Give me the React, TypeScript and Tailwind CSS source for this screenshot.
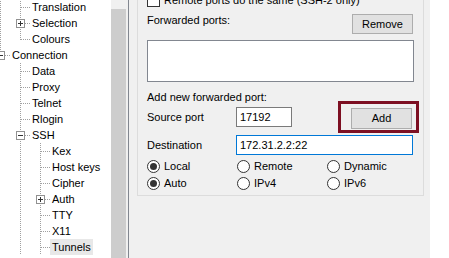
import React from 'react'

type Row = {
  label: string
  level: number
  cont: boolean[]
  last: boolean
  box?: 'plus' | 'minus'
  selected?: boolean
}

const rows: Row[] = [
  { label: 'Translation', level: 1, cont: [true], last: false },
  { label: 'Selection', level: 1, cont: [true], last: false, box: 'plus' },
  { label: 'Colours', level: 1, cont: [true], last: true },
  { label: 'Connection', level: 0, cont: [], last: true, box: 'minus' },
  { label: 'Data', level: 1, cont: [false], last: false },
  { label: 'Proxy', level: 1, cont: [false], last: false },
  { label: 'Telnet', level: 1, cont: [false], last: false },
  { label: 'Rlogin', level: 1, cont: [false], last: false },
  { label: 'SSH', level: 1, cont: [false], last: false, box: 'minus' },
  { label: 'Kex', level: 2, cont: [false, true], last: false },
  { label: 'Host keys', level: 2, cont: [false, true], last: false },
  { label: 'Cipher', level: 2, cont: [false, true], last: false },
  { label: 'Auth', level: 2, cont: [false, true], last: false, box: 'plus' },
  { label: 'TTY', level: 2, cont: [false, true], last: false },
  { label: 'X11', level: 2, cont: [false, true], last: false },
  { label: 'Tunnels', level: 2, cont: [false, true], last: false, selected: true },
]

// one 20x16 cell of tree guide lines
function Guide({ through, own, last, box }: { through?: boolean; own?: boolean; last?: boolean; box?: 'plus' | 'minus' }) {
  const dot = { stroke: '#a0a0a0', strokeWidth: 1, strokeDasharray: '1 1' }
  return (
    <svg width="20" height="16" viewBox="0 0 20 16" shapeRendering="crispEdges" className="shrink-0">
      {through && <line x1="10.5" y1="0" x2="10.5" y2="16" {...dot} />}
      {own && <line x1="10.5" y1="0" x2="10.5" y2={last ? 9 : 16} {...dot} />}
      {own && <line x1="11" y1="8.5" x2="20" y2="8.5" {...dot} />}
      {box && (
        <>
          <rect x="6.5" y="4.5" width="8" height="8" fill="#fff" stroke="#919191" />
          <line x1="8" y1="8.5" x2="13" y2="8.5" stroke="#333" />
          {box === 'plus' && <line x1="10.5" y1="6" x2="10.5" y2="11" stroke="#333" />}
        </>
      )}
    </svg>
  )
}

function Radio({ label, checked }: { label: string; checked?: boolean }) {
  return (
    <div className="flex items-center h-[16px]">
      <div className="w-[13px] h-[13px] shrink-0 rounded-full border border-[#333] bg-white flex items-center justify-center">
        {checked && <div className="w-[7px] h-[7px] rounded-full bg-[#333]" />}
      </div>
      <span className="ml-[4px]">{label}</span>
    </div>
  )
}

export default function App() {
  return (
    <div className="flex w-[449px] h-[258px] overflow-hidden text-[11px] leading-[14px] text-black font-['Liberation_Sans',Arial,sans-serif]">
      {/* tree */}
      <div className="w-[111px] shrink-0 bg-white overflow-hidden">
        <div className="flex flex-col -ml-[10px] -mt-[1px]">
          {rows.map((r) => (
            <div key={r.label} className="flex h-[16px] items-stretch">
              {r.cont.map((c, i) => (
                <Guide key={i} through={c} />
              ))}
              <Guide own last={r.last} box={r.box} />
              <span className={`px-[2px] leading-[16px] whitespace-nowrap ${r.selected ? 'bg-[#e8e8e8]' : ''}`}>{r.label}</span>
            </div>
          ))}
        </div>
      </div>

      {/* scrollbar */}
      <div className="w-[17px] shrink-0 bg-[#f0f0f0] flex">
        <div className="w-[15px] mt-[9px] bg-[#cdcdcd]" />
      </div>
      <div className="w-px shrink-0 bg-[#828790]" />

      {/* panel */}
      <div className="w-[301px] shrink-0 bg-[#f0f0f0] pl-[8px]">
        <div className="w-[287px] -mt-[13px] border border-[#dcdcdc] pt-[5px] pl-[9px] pr-[9px] pb-[4px] flex flex-col">
          <div className="flex items-center h-[14px]">
            <div className="w-[13px] h-[13px] shrink-0 border border-[#333] bg-white" />
            <span className="ml-[4px] whitespace-nowrap">Remote ports do the same (SSH-2 only)</span>
          </div>

          <div className="flex justify-between items-start h-[20px] mt-[7px]">
            <span className="-mt-[1px]">Forwarded ports:</span>
            <button className="w-[61px] h-[20px] mr-[1px] bg-[#e1e1e1] border border-[#adadad] leading-[18px]">Remove</button>
          </div>

          <div className="mt-[6px] h-[42px] bg-white border border-[#828790]" />

          <div className="mt-[8px]">Add new forwarded port:</div>

          <div className="-mt-[3px] h-[32px] flex items-center">
            <span className="w-[89px] shrink-0">Source port</span>
            <div className="w-[56px] h-[20px] shrink-0 bg-white border border-[#7a7a7a] pl-[3px] leading-[18px]">17192</div>
            <div className="ml-[46px] shrink-0 border-[3px] border-[#7d0f22] pl-[10px] pr-[4px] pt-[4px] pb-[1px]">
              <button className="w-[61px] h-[21px] bg-[#e1e1e1] border border-[#adadad] leading-[19px] block">Add</button>
            </div>
          </div>

          <div className="mt-[2px] h-[20px] flex items-center">
            <span className="w-[89px] shrink-0">Destination</span>
            <div className="w-[177px] h-[20px] shrink-0 bg-white border border-[#0078d7] pl-[3px] leading-[18px]">172.31.2.2:22</div>
          </div>

          <div className="mt-[3px] grid grid-cols-[90px_90px_auto]">
            <Radio label="Local" checked />
            <Radio label="Remote" />
            <Radio label="Dynamic" />
          </div>
          <div className="mt-[1px] grid grid-cols-[90px_90px_auto]">
            <Radio label="Auto" checked />
            <Radio label="IPv4" />
            <Radio label="IPv6" />
          </div>
        </div>
      </div>

      <div className="flex-1 bg-white" />
    </div>
  )
}
